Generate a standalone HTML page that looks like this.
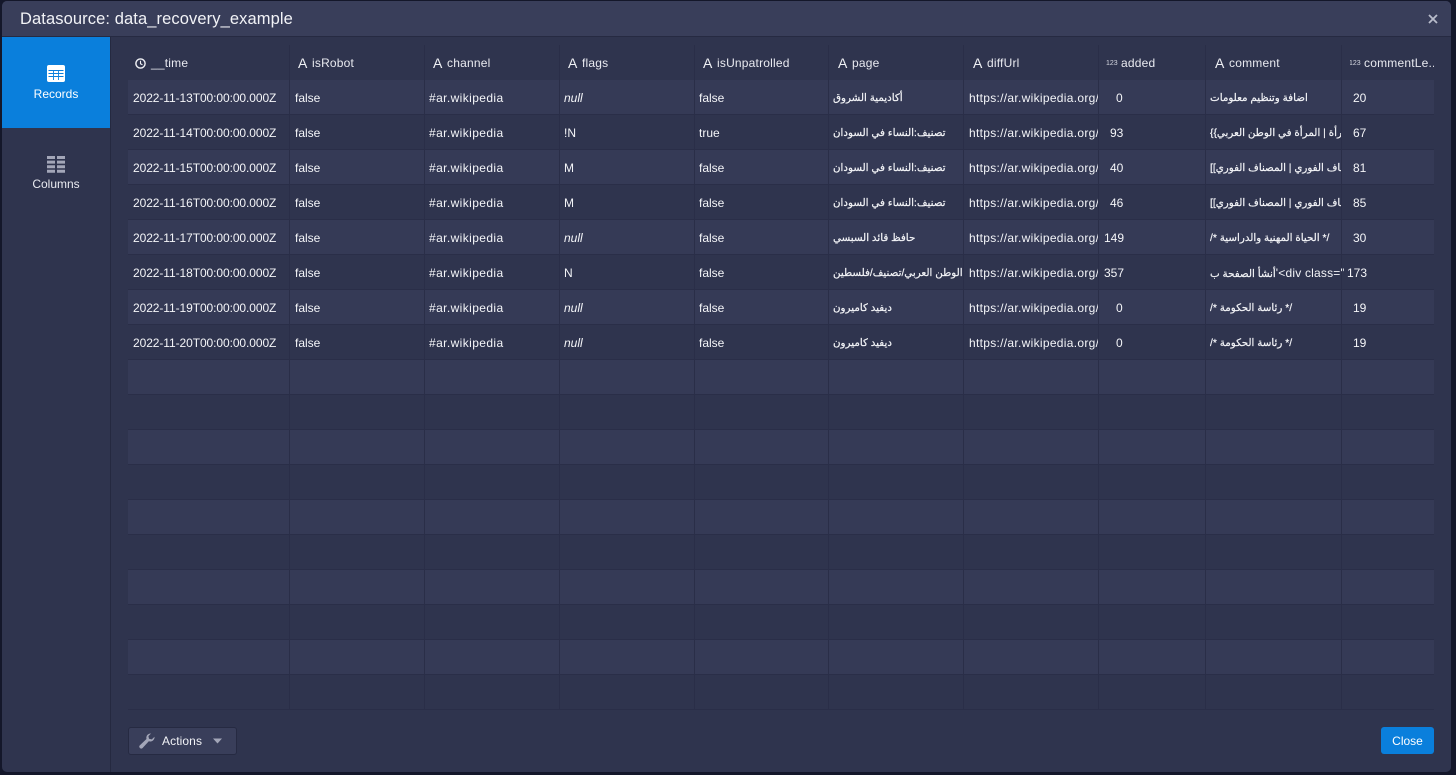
<!DOCTYPE html>
<html lang="en"><head><meta charset="utf-8"><title>Datasource</title>
<style>
html,body{margin:0;padding:0;width:1456px;height:775px;overflow:hidden;background:#14172a;font-family:"Liberation Sans","DejaVu Sans",sans-serif;color:#fff}
.abs,.modal,.hd,.side,.tab,.hc,.r,.v,.c{position:absolute}
.modal{left:2px;top:1px;width:1449px;height:771px;background:#2f344e;border-radius:5px;overflow:hidden}
.hd{left:0;top:0;width:1449px;height:35px;background:#393e5a;border-bottom:1px solid #262a42;font-size:16.5px;line-height:37px;text-indent:18px;color:#f2f3f7;letter-spacing:.1px}
.side{left:0;top:36px;width:108px;height:735px;border-right:1px solid #252940}
.tab{left:0;width:108px;height:91px;text-align:center;font-size:12px}
.tab svg{position:absolute;left:45px}
.tab span{position:absolute;left:0;width:108px}
.r{left:128px;width:1306px;height:34px;border-bottom:1px solid #2a2e48}
.l{background:#353a56}
.v{top:45px;width:1px;height:665px;background:#2a2e48;z-index:3}
.hc{top:44px;height:36px;font-size:12px;line-height:39px;color:#e9eaf0;white-space:nowrap;z-index:4;letter-spacing:.2px}
.hc i{font-style:normal;position:absolute;top:0;letter-spacing:0}
.A{font-size:14px;font-weight:400;left:0;color:#f0f1f5}
.n{font-size:7px;left:-1px;color:#d5d7e0}
.c{height:35px;line-height:37px;font-size:12px;color:#f4f5f8;white-space:nowrap;overflow:hidden;z-index:4}
.d{letter-spacing:-.08px}
.u{letter-spacing:.3px}
.w{letter-spacing:.4px}
.ar{font-size:10.3px;-webkit-text-stroke:.2px #f4f5f8}
.ar bdi{display:inline-block;direction:rtl;unicode-bidi:isolate}
.ar span{-webkit-text-stroke:0;letter-spacing:.2px}
</style></head><body>
<div class="modal">
<div class="hd">Datasource: data_recovery_example</div>
<svg class="abs" style="left:1426px;top:13px" width="10" height="10" viewBox="0 0 10 10"><path d="M1 1L9 9M9 1L1 9" stroke="#b9bccb" stroke-width="1.800"/></svg>
<div class="side"></div>
<div class="tab" style="top:36px;background:#0a7fdc">
<svg style="top:28px" width="18" height="17" viewBox="0 0 18 17"><rect width="18" height="17" rx="2" fill="#fff"/><path d="M1.500 5.500H16.500M1.500 8.500H16.500M1.500 11.500H16.500M6.500 5.500V15M11.500 5.500V15" stroke="#0a7fdc" stroke-width=".9" fill="none"/></svg>
<span style="top:50px">Records</span></div>
<div class="tab" style="top:127px;color:#e9eaf0">
<svg style="top:28px" width="18" height="17" viewBox="0 0 18 17"><path fill="#a3a6b8" d="M0 0H8V3H0ZM10 0H18V3H10ZM0 4.600H8V7.600H0ZM10 4.600H18V7.600H10ZM0 9.200H8V12.200H0ZM10 9.200H18V12.200H10ZM0 13.800H8V16.800H0ZM10 13.800H18V16.800H10Z"/></svg>
<span style="top:49px">Columns</span></div>

<div style="position:absolute;left:-2px;top:-1px;width:1456px;height:775px">
<div class="r l" style="top:80px"></div><div class="r" style="top:115px"></div><div class="r l" style="top:150px"></div><div class="r" style="top:185px"></div><div class="r l" style="top:220px"></div><div class="r" style="top:255px"></div><div class="r l" style="top:290px"></div><div class="r" style="top:325px"></div><div class="r l" style="top:360px"></div><div class="r" style="top:395px"></div><div class="r l" style="top:430px"></div><div class="r" style="top:465px"></div><div class="r l" style="top:500px"></div><div class="r" style="top:535px"></div><div class="r l" style="top:570px"></div><div class="r" style="top:605px"></div><div class="r l" style="top:640px"></div><div class="r" style="top:675px"></div>
<div class="v" style="left:289px"></div><div class="v" style="left:424px"></div><div class="v" style="left:559px"></div><div class="v" style="left:694px"></div><div class="v" style="left:828px"></div><div class="v" style="left:963px"></div><div class="v" style="left:1098px"></div><div class="v" style="left:1205px"></div><div class="v" style="left:1341px"></div>

<div class="hc" style="left:135px"><svg style="position:absolute;left:0;top:14px" width="11" height="11" viewBox="0 0 11 11"><circle cx="5.500" cy="5.500" r="4.600" fill="none" stroke="#f0f1f5" stroke-width="1.400"/><path d="M5.500 2.800V5.800L7.500 6.800" fill="none" stroke="#f0f1f5" stroke-width="1.100"/></svg><span style="margin-left:16px">__time</span></div>
<div class="hc" style="left:298px"><i class="A">A</i><span style="margin-left:14px">isRobot</span></div>
<div class="hc" style="left:433px"><i class="A">A</i><span style="margin-left:14px">channel</span></div>
<div class="hc" style="left:568px"><i class="A">A</i><span style="margin-left:14px">flags</span></div>
<div class="hc" style="left:703px"><i class="A">A</i><span style="margin-left:14px">isUnpatrolled</span></div>
<div class="hc" style="left:838px"><i class="A">A</i><span style="margin-left:14px">page</span></div>
<div class="hc" style="left:973px"><i class="A">A</i><span style="margin-left:14px">diffUrl</span></div>
<div class="hc" style="left:1107px"><i class="n">123</i><span style="margin-left:14px">added</span></div>
<div class="hc" style="left:1215px"><i class="A">A</i><span style="margin-left:14px">comment</span></div>
<div class="hc" style="left:1350px;width:84px;overflow:hidden"><i class="n">123</i><span style="margin-left:14px">commentLe..</span></div>

<div class="c d" style="left:133px;top:80px">2022-11-13T00:00:00.000Z</div><div class="c" style="left:295px;top:80px">false</div><div class="c w" style="left:429px;top:80px">#ar.wikipedia</div><div class="c" style="left:564px;top:80px"><em>null</em></div><div class="c" style="left:699px;top:80px">false</div><div class="c ar" style="left:833px;top:80px;width:130px"><bdi>أكاديمية الشروق</bdi></div><div class="c u" style="left:969px;top:80px;width:129px">https://ar.wikipedia.org/</div><div class="c" style="left:1116px;top:80px">0</div><div class="c ar" style="left:1210px;top:80px;width:131px"><bdi>اضافة وتنظيم معلومات</bdi></div><div class="c" style="left:1353px;top:80px">20</div>

<div class="c d" style="left:133px;top:115px">2022-11-14T00:00:00.000Z</div><div class="c" style="left:295px;top:115px">false</div><div class="c w" style="left:429px;top:115px">#ar.wikipedia</div><div class="c" style="left:564px;top:115px">!N</div><div class="c" style="left:699px;top:115px">true</div><div class="c ar" style="left:833px;top:115px;width:130px"><bdi>تصنيف:النساء في السودان</bdi></div><div class="c u" style="left:969px;top:115px;width:129px">https://ar.wikipedia.org/</div><div class="c" style="left:1110px;top:115px">93</div><div class="c ar" style="left:1210px;top:115px;width:131px"><bdi>{{معلومات | المرأة | المرأة في الوطن العربي}}</bdi></div><div class="c" style="left:1353px;top:115px">67</div>

<div class="c d" style="left:133px;top:150px">2022-11-15T00:00:00.000Z</div><div class="c" style="left:295px;top:150px">false</div><div class="c w" style="left:429px;top:150px">#ar.wikipedia</div><div class="c" style="left:564px;top:150px">M</div><div class="c" style="left:699px;top:150px">false</div><div class="c ar" style="left:833px;top:150px;width:130px"><bdi>تصنيف:النساء في السودان</bdi></div><div class="c u" style="left:969px;top:150px;width:129px">https://ar.wikipedia.org/</div><div class="c" style="left:1110px;top:150px">40</div><div class="c ar" style="left:1210px;top:150px;width:131px"><bdi>[[المصناف الفوري | المصناف الفوري]]</bdi></div><div class="c" style="left:1353px;top:150px">81</div>

<div class="c d" style="left:133px;top:185px">2022-11-16T00:00:00.000Z</div><div class="c" style="left:295px;top:185px">false</div><div class="c w" style="left:429px;top:185px">#ar.wikipedia</div><div class="c" style="left:564px;top:185px">M</div><div class="c" style="left:699px;top:185px">false</div><div class="c ar" style="left:833px;top:185px;width:130px"><bdi>تصنيف:النساء في السودان</bdi></div><div class="c u" style="left:969px;top:185px;width:129px">https://ar.wikipedia.org/</div><div class="c" style="left:1110px;top:185px">46</div><div class="c ar" style="left:1210px;top:185px;width:131px"><bdi>[[المصناف الفوري | المصناف الفوري]]</bdi></div><div class="c" style="left:1353px;top:185px">85</div>

<div class="c d" style="left:133px;top:220px">2022-11-17T00:00:00.000Z</div><div class="c" style="left:295px;top:220px">false</div><div class="c w" style="left:429px;top:220px">#ar.wikipedia</div><div class="c" style="left:564px;top:220px"><em>null</em></div><div class="c" style="left:699px;top:220px">false</div><div class="c ar" style="left:833px;top:220px;width:130px"><bdi>حافظ قائد السبسي</bdi></div><div class="c u" style="left:969px;top:220px;width:129px">https://ar.wikipedia.org/</div><div class="c" style="left:1104px;top:220px">149</div><div class="c ar" style="left:1210px;top:220px;width:131px"><bdi>/* الحياة المهنية والدراسية */</bdi></div><div class="c" style="left:1353px;top:220px">30</div>

<div class="c d" style="left:133px;top:255px">2022-11-18T00:00:00.000Z</div><div class="c" style="left:295px;top:255px">false</div><div class="c w" style="left:429px;top:255px">#ar.wikipedia</div><div class="c" style="left:564px;top:255px">N</div><div class="c" style="left:699px;top:255px">false</div><div class="c ar" style="left:833px;top:255px;width:130px"><bdi>المرأة في الوطن العربي/تصنيف/فلسطين</bdi></div><div class="c u" style="left:969px;top:255px;width:129px">https://ar.wikipedia.org/</div><div class="c" style="left:1104px;top:255px">357</div><div class="c ar" style="left:1210px;top:255px;width:134px"><bdi>أنشأ الصفحة ب</bdi><span style="font-size:12px">'&lt;div class="&nbsp;"</span></div><div class="c" style="left:1347px;top:255px">173</div>

<div class="c d" style="left:133px;top:290px">2022-11-19T00:00:00.000Z</div><div class="c" style="left:295px;top:290px">false</div><div class="c w" style="left:429px;top:290px">#ar.wikipedia</div><div class="c" style="left:564px;top:290px"><em>null</em></div><div class="c" style="left:699px;top:290px">false</div><div class="c ar" style="left:833px;top:290px;width:130px"><bdi>ديفيد كاميرون</bdi></div><div class="c u" style="left:969px;top:290px;width:129px">https://ar.wikipedia.org/</div><div class="c" style="left:1116px;top:290px">0</div><div class="c ar" style="left:1210px;top:290px;width:131px"><bdi>/* رئاسة الحكومة */</bdi></div><div class="c" style="left:1353px;top:290px">19</div>

<div class="c d" style="left:133px;top:325px">2022-11-20T00:00:00.000Z</div><div class="c" style="left:295px;top:325px">false</div><div class="c w" style="left:429px;top:325px">#ar.wikipedia</div><div class="c" style="left:564px;top:325px"><em>null</em></div><div class="c" style="left:699px;top:325px">false</div><div class="c ar" style="left:833px;top:325px;width:130px"><bdi>ديفيد كاميرون</bdi></div><div class="c u" style="left:969px;top:325px;width:129px">https://ar.wikipedia.org/</div><div class="c" style="left:1116px;top:325px">0</div><div class="c ar" style="left:1210px;top:325px;width:131px"><bdi>/* رئاسة الحكومة */</bdi></div><div class="c" style="left:1353px;top:325px">19</div>

<div class="abs" style="left:128px;top:727px;width:107px;height:26px;background:#393e5a;border:1px solid #262a42;border-radius:3px"></div>
<svg class="abs" style="left:139px;top:733px" width="16" height="16" viewBox="0 0 16 16"><path fill="#a3a6b8" d="M15.500 3.800A4.300 4.300 0 0 1 9.800 8.300L3.600 15A1.900 1.900 0 0 1 .9 12.300L7.500 6A4.300 4.300 0 0 1 12 .5L9.400 3.100 10 5.800 12.800 6.400Z"/></svg>
<div class="abs" style="left:162px;top:727px;line-height:28px;font-size:12px;color:#f2f3f7;letter-spacing:.1px">Actions</div>
<svg class="abs" style="left:213px;top:738px" width="9" height="6" viewBox="0 0 9 6"><path fill="#a3a6b8" d="M0 .5H9L4.500 5.500Z"/></svg>
<div class="abs" style="left:1381px;top:727px;width:53px;height:27px;background:#0a7fdc;border-radius:3px;text-align:center;line-height:28px;font-size:12px;color:#fff">Close</div>
</div>
</div>
</body></html>
